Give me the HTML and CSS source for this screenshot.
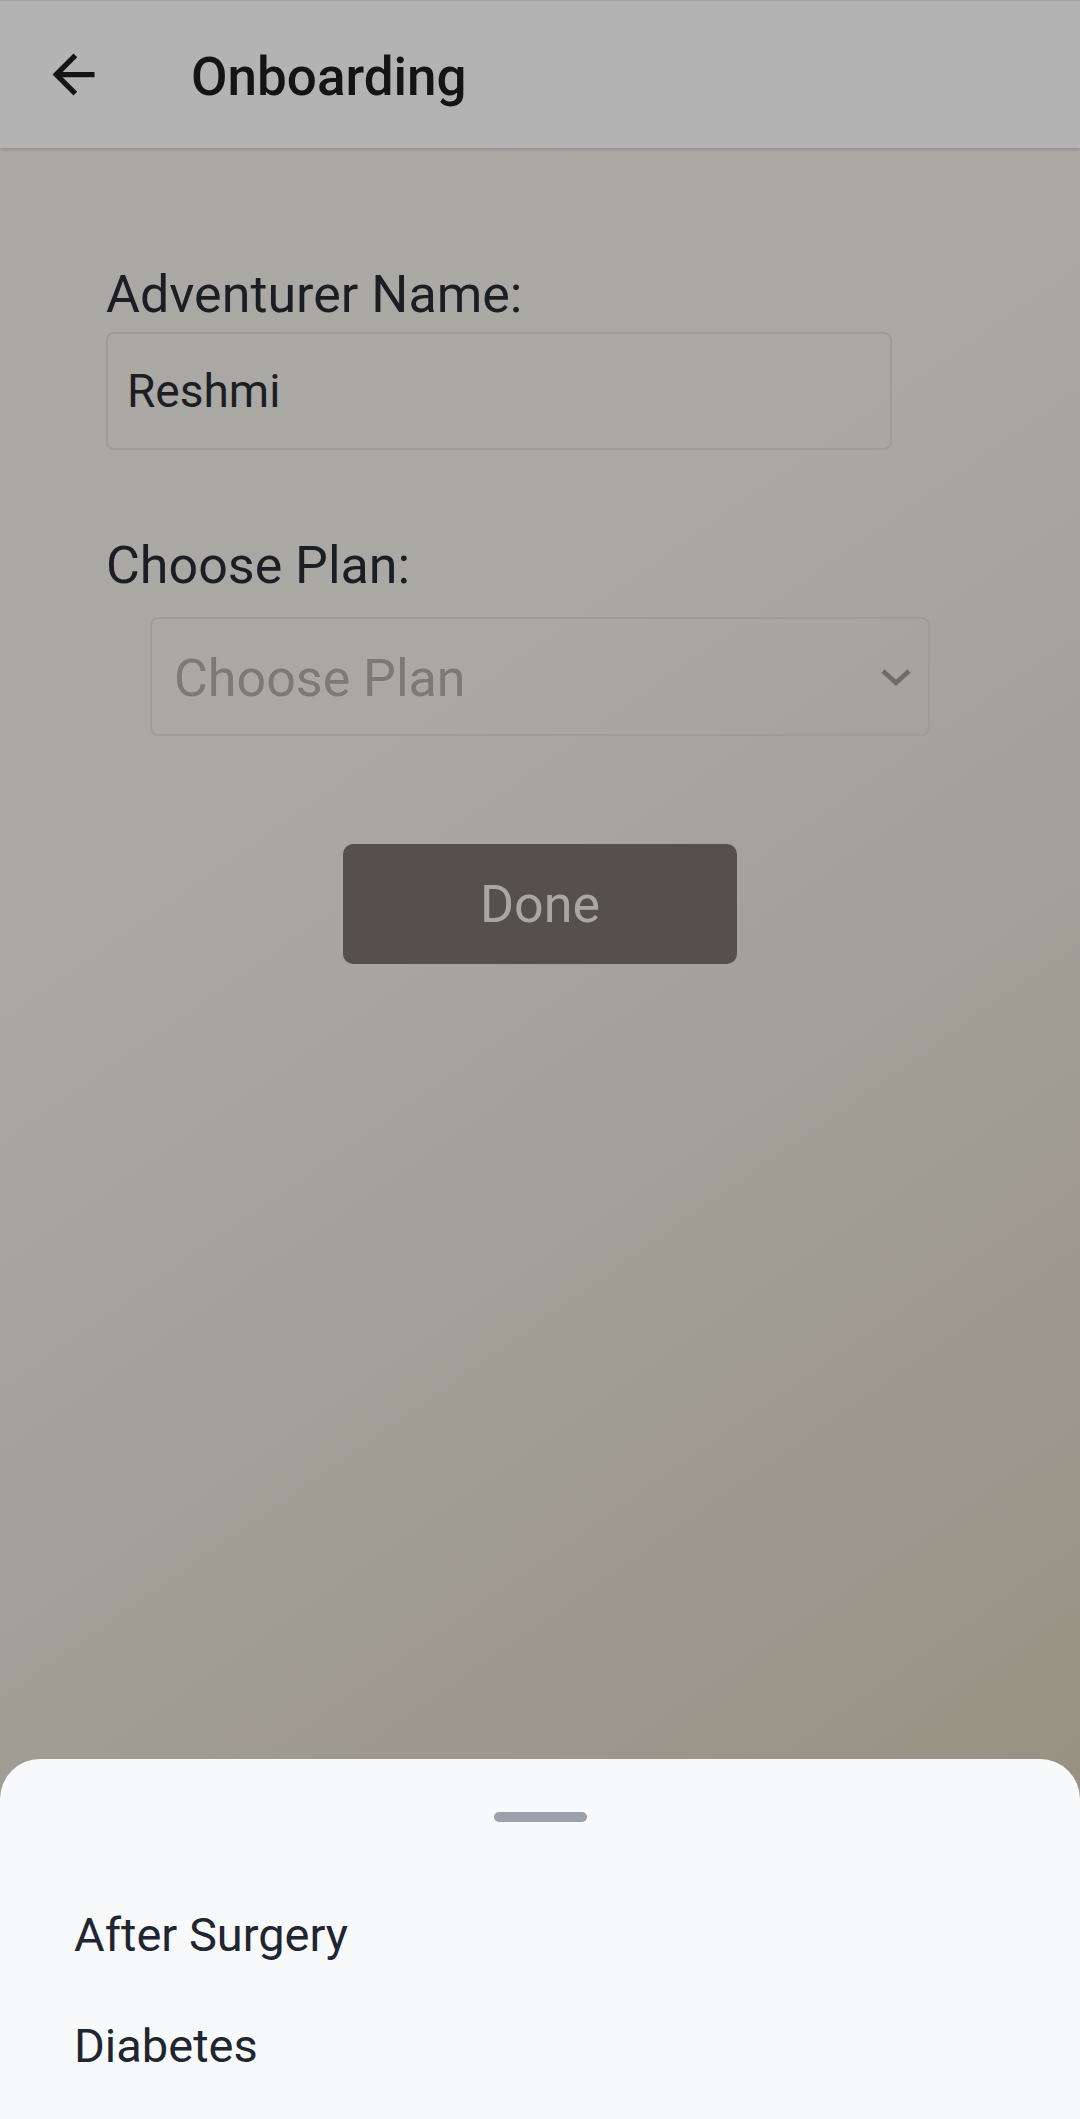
FILE: index.html
```html
<!DOCTYPE html>
<html lang="en">
<head>
    <meta charset="UTF-8">
    <meta name="viewport" content="width=device-width" />
    <title>Onboarding</title>
<link rel="stylesheet" href="styles.css">
</head>
<body>
<div class=screen>
  <header class=bar>
    <button class=back aria-label="Back">
      <svg viewBox="0 0 24 24" width="63" height="63"><path d="M20 11H7.83l5.59-5.59L12 4l-8 8 8 8 1.41-1.41L7.83 13H20v-2z" fill="#141414"/></svg>
    </button>
    <h1 class=title>Onboarding</h1>
  </header>

  <main class=form>
    <label class=label for=name>Adventurer Name:</label>
    <div class=field id=name>Reshmi</div>

    <label class=label>Choose Plan:</label>
    <div class="field select">
      <span class=placeholder>Choose Plan</span>
      <svg class=chev viewBox="0 0 32 18" width="32" height="18"><polyline points="3,3 16,15 29,3" fill="none" stroke="#6e6c69" stroke-width="4.5"/></svg>
    </div>

    <div class=actions>
      <button class=done>Done</button>
    </div>
  </main>
</div>

<div class=sheet>
  <div class=handle></div>
  <div class=option>After Surgery</div>
  <div class=option>Diabetes</div>
</div>
</body>
</html>
```

FILE: styles.css
```css
html, body {
  margin: 0;
  height: 100%;
}
body {
  font-family: Roboto, "Noto Sans", sans-serif;
  background: linear-gradient(145deg, #aba9a5 0%, #aaa8a3 35%, #a09d95 62%, #958d7c 100%);
  overflow: hidden;
}
.screen {
  min-height: 100%;
}
.bar {
  height: 147px;
  display: flex;
  align-items: center;
  background: #b3b3b3;
  border-top: 1px solid #a2a2a2;
  box-shadow: 0 2px 3px rgba(0,0,0,0.12);
}
.back {
  width: 63px;
  height: 63px;
  margin-left: 42px;
  padding: 0;
  border: none;
  background: none;
  display: flex;
}
.title {
  margin: 5px 0 0 86px;
  font-size: 53px;
  font-weight: 500;
  color: #141414;
}
.form {
  padding: 116px 0 0 106px;
  display: flex;
  flex-direction: column;
}
.label {
  font-size: 52px;
  line-height: 62px;
  color: #1b1e25;
}
.field {
  box-sizing: border-box;
  width: 786px;
  height: 118px;
  margin-top: 6px;
  margin-bottom: 85px;
  padding: 0 19px;
  display: flex;
  align-items: center;
  border: 2px solid #9f9c97;
  border-radius: 8px;
  font-size: 46px;
  color: #1b1e25;
}
.select {
  width: 780px;
  height: 119px;
  margin: 20px 0 0 44px;
  padding: 0 16px 0 22px;
  justify-content: space-between;
  font-size: 52px;
}
.placeholder {
  color: #7b7a77;
  padding-top: 4px;
}
.actions {
  display: flex;
  justify-content: center;
  margin: 108px 0 0 -106px;
}
.done {
  width: 394px;
  height: 120px;
  border: none;
  border-radius: 10px;
  background: #55504d;
  color: #a9a7a4;
  font: 52px Roboto, sans-serif;
  padding: 0;
}
.sheet {
  position: fixed;
  left: 0;
  right: 0;
  bottom: 0;
  height: 360px;
  background: #f8f9fb;
  border-radius: 40px 40px 0 0;
  padding-top: 53px;
  box-sizing: border-box;
}
.handle {
  width: 93px;
  height: 10px;
  margin: 0 auto 57px;
  border-radius: 5px;
  background: #9ca2ab;
}
.option {
  padding-left: 74px;
  font-size: 47px;
  line-height: 111px;
  color: #1f2531;
}
```
